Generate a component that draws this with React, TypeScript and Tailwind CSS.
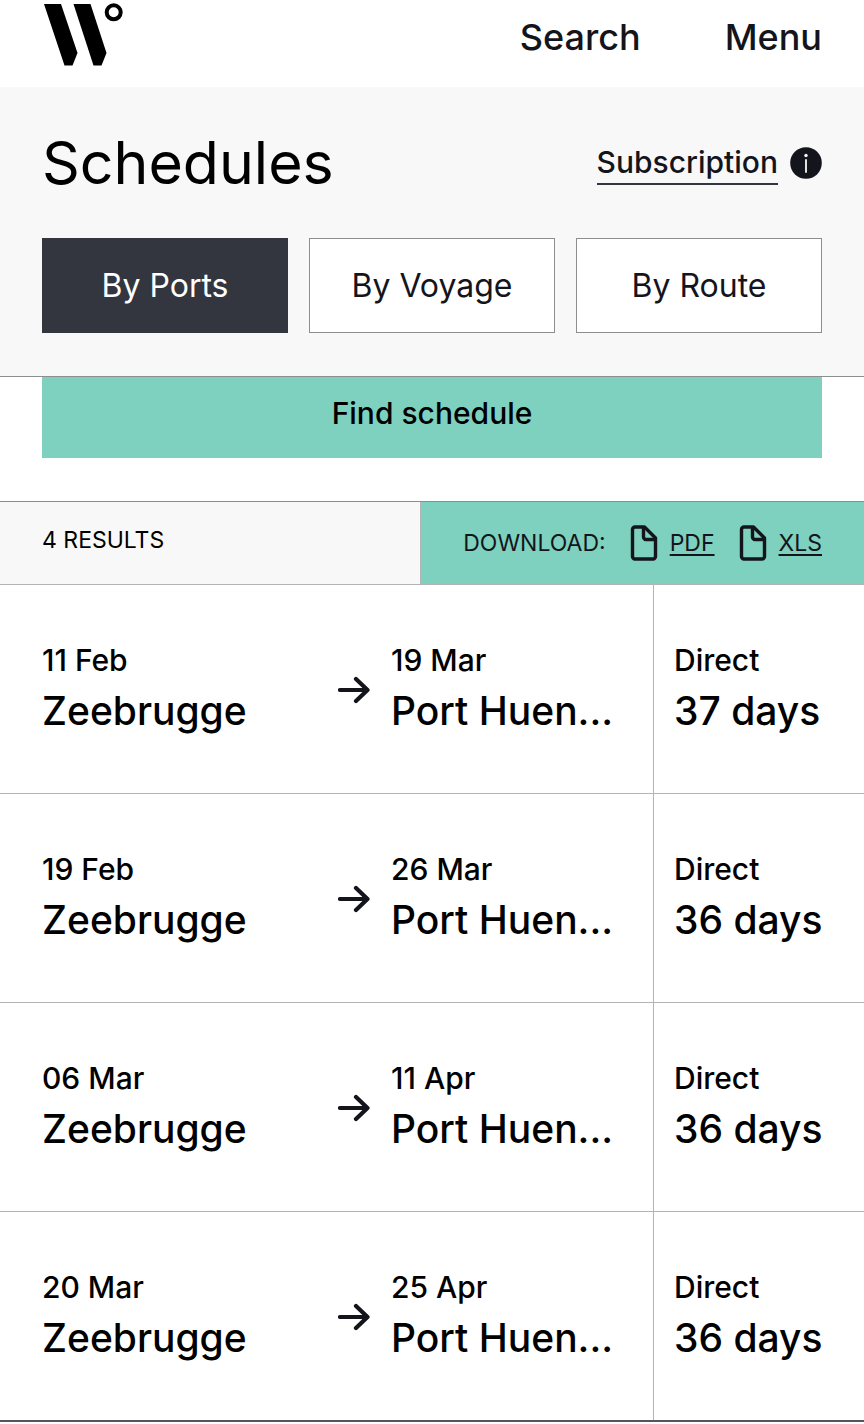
import clsx from "clsx";

type Sailing = {
  departure: string;
  origin: string;
  arrival: string;
  destination: string;
  routing: string;
  duration: string;
};

const tabs = ["By Ports", "By Voyage", "By Route"];

const sailings: Sailing[] = [
  {
    departure: "11 Feb",
    origin: "Zeebrugge",
    arrival: "19 Mar",
    destination: "Port Huen...",
    routing: "Direct",
    duration: "37 days"
  },
  {
    departure: "19 Feb",
    origin: "Zeebrugge",
    arrival: "26 Mar",
    destination: "Port Huen...",
    routing: "Direct",
    duration: "36 days"
  },
  {
    departure: "06 Mar",
    origin: "Zeebrugge",
    arrival: "11 Apr",
    destination: "Port Huen...",
    routing: "Direct",
    duration: "36 days"
  },
  {
    departure: "20 Mar",
    origin: "Zeebrugge",
    arrival: "25 Apr",
    destination: "Port Huen...",
    routing: "Direct",
    duration: "36 days"
  }
];

function Logo() {
  return (
    <svg viewBox="-2 0 84 64" className="h-16 w-[84px]" aria-hidden="true">
      <path d="M0 1h17l16.500 49L28.500 62.500h-8z" />
      <path d="M29.500 1h17L62.500 50l-5 12.500h-8z" />
      <circle cx="69.700" cy="9.300" r="7" fill="none" stroke="#000" strokeWidth="4" />
    </svg>
  );
}

function InfoIcon() {
  return (
    <svg viewBox="0 0 32 32" className="size-8" aria-hidden="true">
      <circle cx="16" cy="16" r="15.800" fill="#14151c" />
      <circle cx="16" cy="8.500" r="1.700" fill="#f8f8f8" />
      <path d="M16 13v12" stroke="#f8f8f8" strokeWidth="1.800" strokeLinecap="round" />
    </svg>
  );
}

function FileIcon() {
  return (
    <svg
      viewBox="0 0 28 36"
      className="h-9 w-7"
      fill="none"
      stroke="currentColor"
      strokeWidth="3.400"
      strokeLinejoin="round"
      aria-hidden="true"
    >
      <path d="M5 2h9.500L25.500 13v18.500a2.500 2.500 0 0 1-2.500 2.500H5a2.500 2.500 0 0 1-2.500-2.500v-27A2.500 2.500 0 0 1 5 2z" />
      <path d="M13.500 2v10a2.500 2.500 0 0 0 2.500 2.500h9.500" />
    </svg>
  );
}

function ArrowIcon() {
  return (
    <svg
      viewBox="0 0 32 28"
      className="h-7 w-8"
      fill="none"
      stroke="#14151c"
      strokeWidth="4.200"
      strokeLinecap="round"
      strokeLinejoin="round"
      aria-hidden="true"
    >
      <path d="M2 14h27M18 3l11.500 11L18 25" />
    </svg>
  );
}

function Stop({ label, value }: { label: string; value: string }) {
  return (
    <div className="whitespace-nowrap">
      <p className="text-[30px] leading-[50px]">{label}</p>
      <p className="text-[39px] leading-[52px]">{value}</p>
    </div>
  );
}

function SailingRow({ sailing }: { sailing: Sailing }) {
  return (
    <li className="flex border-b border-[#b4b4b6] last:border-b-2 last:border-[#55555d]">
      <div className="grid flex-1 grid-cols-[296px_53px_1fr] border-r border-[#b4b4b6] pt-[50px] pb-14 pl-[42px]">
        <Stop label={sailing.departure} value={sailing.origin} />
        <div className="flex items-center pt-2">
          <ArrowIcon />
        </div>
        <Stop label={sailing.arrival} value={sailing.destination} />
      </div>
      <div className="w-[210px] pt-[50px] pb-14 pl-5">
        <Stop label={sailing.routing} value={sailing.duration} />
      </div>
    </li>
  );
}

export default function App() {
  return (
    <div className="bg-white font-['Inter',sans-serif] font-medium text-black">
      <header className="flex h-[87px] items-start justify-between px-[42px] pt-[3px] text-[#14151c]">
        <a href="#home" aria-label="Home">
          <Logo />
        </a>
        <nav className="flex gap-[84px] pt-2 text-4xl leading-[52px]">
          <button type="button">Search</button>
          <button type="button">Menu</button>
        </nav>
      </header>

      <section className="border-b border-[#8e8e91] bg-[#f8f8f8] px-[42px] pt-10 pb-[43px]">
        <div className="flex items-center justify-between">
          <h1 className="text-[59px] leading-[72px] font-normal">Schedules</h1>
          <div className="flex items-center gap-3 text-[#14151c]">
            <a
              href="#subscription"
              className="border-b-2 border-[#34363f] text-[30px] leading-[42px]"
            >
              Subscription
            </a>
            <button type="button" aria-label="About subscriptions">
              <InfoIcon />
            </button>
          </div>
        </div>
        <div className="mt-[39px] grid grid-cols-3 gap-[21px] text-[32px]">
          {tabs.map((tab, index) => (
            <button
              key={tab}
              type="button"
              className={clsx(
                "h-[95px] border font-normal",
                index === 0
                  ? "border-[#34363f] bg-[#34363f] text-white"
                  : "border-[#8e8e91] bg-white text-[#14151c]"
              )}
            >
              {tab}
            </button>
          ))}
        </div>
      </section>

      <main>
        <div className="px-[42px] pb-[43px]">
          <button
            type="button"
            className="w-full bg-[#7dd1be] pt-3 pb-[21px] text-[30px] leading-[48px]"
          >
            Find schedule
          </button>
        </div>

        <div className="flex border-t border-b border-t-[#8e8e91] border-b-[#b4b4b6] text-[23px] font-normal">
          <p className="flex-1 border-r border-[#b4b4b6] bg-[#f8f8f8] pt-5 pl-[42px] leading-9">
            4 RESULTS
          </p>
          <div className="flex h-[82px] items-center bg-[#7dd1be] px-[42px] text-[#14151c]">
            <span>DOWNLOAD:</span>
            <a href="#pdf" className="ml-6 flex items-center gap-3">
              <FileIcon />
              <span className="underline decoration-2 underline-offset-3">PDF</span>
            </a>
            <a href="#xls" className="ml-6 flex items-center gap-3">
              <FileIcon />
              <span className="underline decoration-2 underline-offset-3">XLS</span>
            </a>
          </div>
        </div>

        <ul>
          {sailings.map((sailing) => (
            <SailingRow key={sailing.departure} sailing={sailing} />
          ))}
        </ul>
      </main>
    </div>
  );
}
